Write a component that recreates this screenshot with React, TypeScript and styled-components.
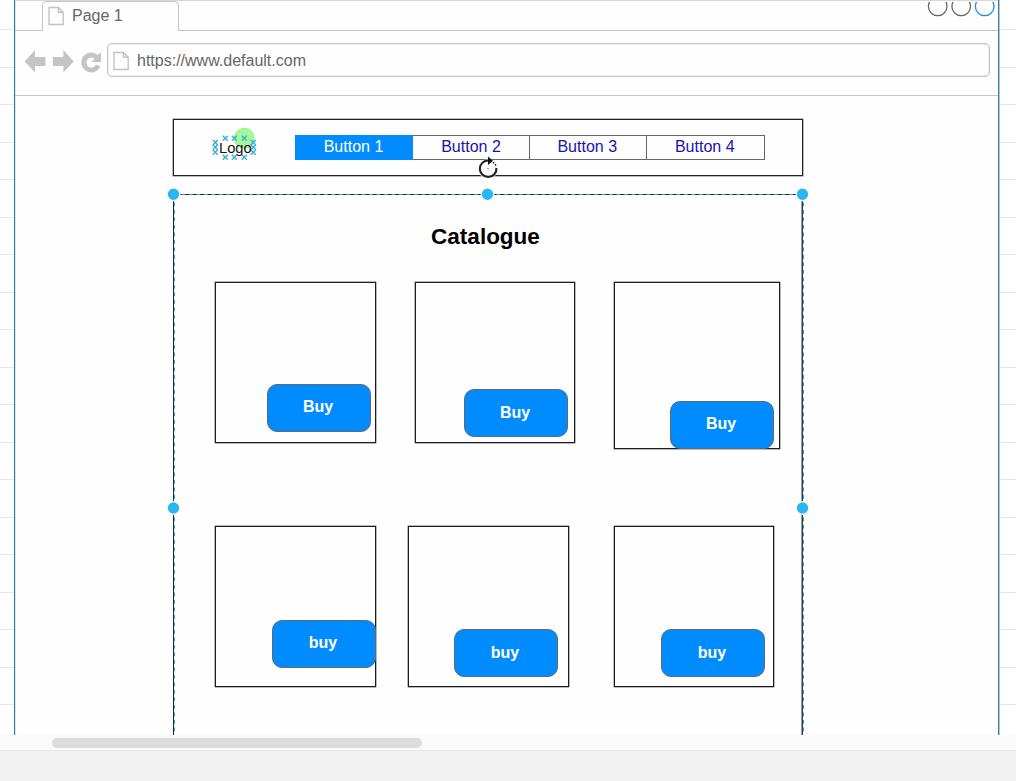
import React from "react";
import styled, { createGlobalStyle } from "styled-components";

const GlobalStyle = createGlobalStyle`
  * { box-sizing: border-box; }
  body { margin: 0; font-family: "Liberation Sans", Arial, sans-serif; font-size: 16px; overflow: hidden; }
`;

const Editor = styled.div`
  display: flex;
  flex-direction: column;
  width: 1016px;
  height: 781px;
  background: #f2f2f2;
`;

const Canvas = styled.div`
  height: 735px;
  padding: 0 17px 0 14px;
  overflow: hidden;
  background:
    linear-gradient(#dfe9e7 0 1px, transparent 1px 38px, #dfe9e7 38px 39px, transparent 39px) 0 29px / 100% 75px,
    #fff;
`;

const BrowserFrame = styled.div`
  height: 735px;
  border: solid #42808f;
  border-width: 0 1px;
  box-shadow: inset 1px 0 #d3e8ed, -1px 0 #edf6f8, 1px 0 #a9c8d0;
  background: #fefefe;
`;

const TabStrip = styled.div`
  display: flex;
  justify-content: space-between;
  height: 31px;
  padding: 1px 3px 0 27px;
  border-top: 1px solid #d8d8d8;
  box-shadow: inset 0 -1px #c4c4c4;
  overflow: hidden;
`;

const Tab = styled.div`
  display: flex;
  align-items: center;
  gap: 7px;
  width: 137px;
  height: 30px;
  margin-top: -1px;
  padding: 0 0 1px 5px;
  border: 1px solid #c4c4c4;
  border-bottom: 0;
  border-radius: 5px 5px 0 0;
  background: #fefefe;
  color: #666;
`;

const Toolbar = styled.div`
  display: flex;
  align-items: center;
  height: 65px;
  padding: 0 8px 6px 9px;
  border-bottom: 1px solid #c4c4c4;
`;

const NavIcons = styled.svg`
  flex: none;
  width: 83px;
  height: 34px;
`;

const AddressBar = styled.div`
  display: flex;
  flex: 1;
  align-items: center;
  gap: 7px;
  height: 34px;
  padding: 2px 0 0 5px;
  border: 1px solid #c4c4c4;
  border-radius: 5px;
  box-shadow: inset 0 0 0 0.5px #ddd;
  color: #666;
`;

const Site = styled.div`
  display: flex;
  flex-direction: column;
  gap: 18px;
  width: 631px;
  margin: 23px 0 0 158px;
`;

const Header = styled.div`
  display: flex;
  gap: 36px;
  width: 630px;
  height: 57px;
  padding: 7px 0 0 35px;
  border: 1px solid #222;
  box-shadow: 0 0 0 0.3px #222;
`;

const Logo = styled.div`
  position: relative;
  width: 50px;
  height: 36px;
  padding: 13px 0 0 10px;
  font-size: 14.7px;
  line-height: 17px;
  color: #111;
`;

const LogoMarks = styled.svg`
  position: absolute;
  left: 3px;
  top: 0;
  width: 50px;
  height: 36px;
`;

const LogoText = styled.span`
  position: relative;
`;

const Nav = styled.div`
  display: flex;
  height: 25px;
  margin-top: 8px;
  border: 1px solid #666;
  border-left: 0;
`;

const NavButton = styled.div<{ $active?: boolean; $w: number }>`
  width: ${(p) => p.$w}px;
  height: ${(p) => (p.$active ? 25 : 23)}px;
  margin-top: ${(p) => (p.$active ? -1 : 0)}px;
  padding: ${(p) => (p.$active ? "1px 1px 0 0" : "0")};
  text-align: center;
  line-height: 21px;
  color: ${(p) => (p.$active ? "#fff" : "#1a10b4")};
  background: ${(p) => (p.$active ? "#008cff" : "transparent")};
  & + & + & {
    border-left: 1px solid #666;
    padding-right: 1.5px;
  }
`;

const Panel = styled.div`
  position: relative;
  width: 630px;
  height: 628px;
  padding-top: 29px;
  border: 1px solid #16292e;
  border-right-color: #1d4350;
  box-shadow: inset -0.5px 0 #1d4350;
`;

const Title = styled.h1`
  margin: 0 5px 0 0;
  height: 58px;
  text-align: center;
  font-size: 22.5px;
  line-height: 25px;
  color: #000;
`;

const CardRow = styled.div`
  display: flex;
  align-items: flex-start;
  height: 244px;
  padding-left: 41px;
`;

const Card = styled.div<{ $w?: number; $h?: number; $after?: number; $right: number; $bottom: number }>`
  display: flex;
  align-items: flex-end;
  justify-content: flex-end;
  flex: none;
  width: ${(p) => p.$w ?? 161}px;
  height: ${(p) => p.$h ?? 161}px;
  margin-right: ${(p) => p.$after ?? 0}px;
  padding: 0 ${(p) => p.$right}px ${(p) => p.$bottom}px 0;
  border: 1px solid #1c1c1c;
  box-shadow: 0 0 0 0.3px #1c1c1c;
`;

const BuyButton = styled.div<{ $overRight?: boolean; $overBottom?: boolean; $line?: number }>`
  flex: none;
  width: 104px;
  height: 48px;
  margin: 0 ${(p) => (p.$overRight ? -1 : 0)}px ${(p) => (p.$overBottom ? -1 : 0)}px 0;
  padding-right: 2px;
  border: 1px solid #5f6b76;
  border-radius: 10px;
  background: #008cff;
  color: #fff;
  font-weight: bold;
  line-height: ${(p) => p.$line ?? 45}px;
  text-align: center;
`;

const Selection = styled.svg`
  position: absolute;
  left: -11px;
  top: -47px;
  width: 654px;
  height: 690px;
`;

const ScrollTrack = styled.div`
  height: 16px;
  padding: 3px 0 0 52px;
  background: #fafafa;
  border-bottom: 1px solid #e8e8e8;
`;

const ScrollThumb = styled.div`
  width: 370px;
  height: 10px;
  border-radius: 5px;
  background: #dddddd;
`;

const PageIcon = () => (
  <svg width="17" height="20" viewBox="0 0 17 20" fill="none" stroke="#c4c4c4" strokeWidth="1.4">
    <path d="M1 1.5H10.5L15.2 6.2V18.5H1Z M10.5 1.5V6.2H15.2" />
  </svg>
);

const marks = [
  [13.3, 11.3], [22.3, 11.3], [32.3, 11.3],
  [3.3, 15.5], [3.3, 20.3], [3.3, 25.2],
  [41.3, 15.5], [41.3, 20.3], [41.3, 25.2],
  [13.3, 30.3], [22.3, 30.3], [32.3, 30.3],
];

const handles = [[10.5, 46.3], [324.5, 46.3], [639.5, 46.3], [10.5, 360], [639.5, 360]];

export default function App() {
  return (
    <>
      <GlobalStyle />
      <Editor>
        <Canvas>
          <BrowserFrame>
            <TabStrip>
              <Tab><PageIcon /><span>Page 1</span></Tab>
              <svg width="69" height="17" viewBox="926 2 69 17" fill="none" strokeWidth="1.3">
                <circle cx="937.7" cy="6.4" r="9.3" stroke="#666" />
                <circle cx="961.2" cy="6.4" r="9.3" stroke="#666" />
                <circle cx="984.7" cy="6.4" r="9.3" stroke="#1c8fdf" />
              </svg>
            </TabStrip>
            <Toolbar>
              <NavIcons viewBox="24 43 83 34">
                <g fill="#c4c4c4">
                  <path d="M24.7 61.5L35 50V57H45.5V66H35V72.5Z" />
                  <path d="M73.7 61.5L63.4 50V57H52.9V66H63.4V72.5Z" />
                  <path d="M101 52V62H91.5L94.7 58.8A5 5 0 1 0 96 64.5L100.4 66.5A10 10 0 1 1 98 55Z" />
                </g>
              </NavIcons>
              <AddressBar><PageIcon /><span>https://www.default.com</span></AddressBar>
            </Toolbar>
            <Site>
              <Header>
                <Logo>
                  <LogoMarks viewBox="0 0 50 36">
                    <circle cx="32.3" cy="11.3" r="10.6" fill="#a6f79b" />
                    {marks.map(([x, y], i) => (
                      <path key={i} d={`M${x - 2.5} ${y - 2.5}l5 5m0-5l-5 5`} stroke="#35aede" strokeWidth="1.4" />
                    ))}
                  </LogoMarks>
                  <LogoText>Logo</LogoText>
                </Logo>
                <Nav>
                  <NavButton $active $w={118}>Button 1</NavButton>
                  <NavButton $w={116}>Button 2</NavButton>
                  <NavButton $w={117}>Button 3</NavButton>
                  <NavButton $w={118}>Button 4</NavButton>
                </Nav>
              </Header>
              <Panel>
                <Title>Catalogue</Title>
                <CardRow>
                  <Card $after={39} $right={4} $bottom={10}><BuyButton $line={43}>Buy</BuyButton></Card>
                  <Card $w={160} $after={39} $right={6} $bottom={5}><BuyButton>Buy</BuyButton></Card>
                  <Card $w={166} $h={167} $right={5} $bottom={0}><BuyButton $overBottom $line={43}>Buy</BuyButton></Card>
                </CardRow>
                <CardRow>
                  <Card $after={32} $right={0} $bottom={18}><BuyButton $overRight $line={43}>buy</BuyButton></Card>
                  <Card $after={45} $right={10} $bottom={9}><BuyButton>buy</BuyButton></Card>
                  <Card $w={160} $right={8} $bottom={9}><BuyButton>buy</BuyButton></Card>
                </CardRow>
                <Selection viewBox="0 0 654 690">
                  <path d="M11 46.5H640" stroke="#3f9fba" strokeDasharray="3.75 3.75" />
                  <path d="M11.5 47V690" stroke="#38a3c4" strokeDasharray="3.75 3.75" />
                  <path d="M640.5 47V690" stroke="#4c93a5" strokeDasharray="3.75 3.75" />
                  {handles.map(([x, y], i) => (
                    <circle key={i} cx={x} cy={y} r="6.3" fill="#29b6f2" stroke="#fff" strokeWidth="1.2" />
                  ))}
                  <circle cx="325" cy="21" r="10" fill="#fff" fillOpacity="0.75" />
                  <g fill="none" stroke="#222" strokeWidth="2.1">
                    <path d="M326 12.5A8.3 8.3 0 1 0 333.4 20" />
                    <path d="M330 14.3A8.3 8.3 0 0 1 333.3 19" strokeWidth="1.5" strokeDasharray="1.5 1.3" />
                  </g>
                  <path d="M325 8.5L330 12.7L325 17Z" fill="#111" />
                  <circle cx="325" cy="20.8" r="0.7" fill="#555" />
                </Selection>
              </Panel>
            </Site>
          </BrowserFrame>
        </Canvas>
        <ScrollTrack><ScrollThumb /></ScrollTrack>
      </Editor>
    </>
  );
}
